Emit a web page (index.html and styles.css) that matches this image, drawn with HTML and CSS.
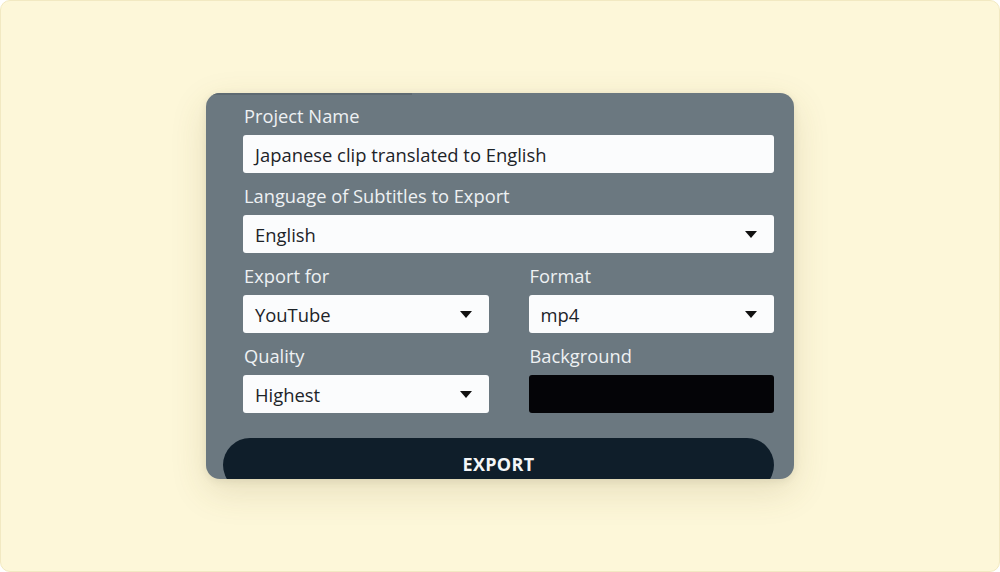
FILE: index.html
```html
<!DOCTYPE html>
<html lang="en">
<head>
<meta charset="utf-8">
<title>Export</title>
<link rel="stylesheet" href="styles.css">
</head>
<body>
<div class="frame">
  <div class="card">
    <div class="card-topline"></div>
    <div class="form">
      <div class="field">
        <div class="label">Project Name</div>
        <div class="input">Japanese clip translated to English</div>
      </div>
      <div class="field">
        <div class="label">Language of Subtitles to Export</div>
        <div class="input select"><span>English</span><span class="caret"></span></div>
      </div>
      <div class="row">
        <div class="field">
          <div class="label">Export for</div>
          <div class="input select"><span>YouTube</span><span class="caret"></span></div>
        </div>
        <div class="field">
          <div class="label">Format</div>
          <div class="input select"><span>mp4</span><span class="caret"></span></div>
        </div>
      </div>
      <div class="row">
        <div class="field">
          <div class="label">Quality</div>
          <div class="input select"><span>Highest</span><span class="caret"></span></div>
        </div>
        <div class="field">
          <div class="label">Background</div>
          <div class="input swatch"></div>
        </div>
      </div>
    </div>
    <div class="export-btn">EXPORT</div>
  </div>
</div>
</body>
</html>
```
FILE: styles.css
```css
* { box-sizing: border-box; }
html, body { margin: 0; padding: 0; background: #ffffff; }
body {
  font-family: "Open Sans", "Noto Sans", sans-serif;
  width: 1000px;
  height: 572px;
  overflow: hidden;
}
.frame {
  width: 1000px;
  height: 572px;
  background: #fdf7d9;
  border: 1px solid #f2e9c2;
  border-radius: 10px;
  padding-top: 92px;
  padding-left: 205px;
}
.card {
  position: relative;
  width: 588px;
  height: 386px;
  background: #6b7880;
  border-radius: 14px;
  overflow: hidden;
  box-shadow: 0 12px 36px rgba(110, 95, 40, 0.16), 0 2px 8px rgba(0, 0, 0, 0.08);
}
.card-topline {
  position: absolute;
  left: 0;
  top: 0;
  width: 206px;
  height: 2px;
  background: #5e6a72;
}
.form {
  padding: 0 20px 0 37px;
}
.row {
  display: flex;
  gap: 40px;
}
.row .field { flex: 1; }
.label {
  height: 42px;
  padding-top: 9px;
  line-height: 28px;
  font-size: 18.3px;
  color: #eef1f3;
  padding-left: 1px;
}
.input {
  height: 38px;
  background: #fbfcfd;
  border-radius: 3px;
  padding-left: 12px;
  padding-right: 17px;
  display: flex;
  align-items: center;
  font-size: 18.4px;
  color: #1d2328;
}
.select { justify-content: space-between; }
.caret {
  width: 0;
  height: 0;
  border-left: 6px solid transparent;
  border-right: 6px solid transparent;
  border-top: 7px solid #111;
}
.swatch { background: #040407; }
.export-btn {
  margin: 25px 20px 0 17px;
  height: 54px;
  border-radius: 27px;
  background: #0f1e2a;
  color: #f4f6f8;
  font-weight: 700;
  font-size: 18px;
  letter-spacing: 0.3px;
  display: flex;
  justify-content: center;
  padding-top: 14px;
  line-height: 24px;
}
```
